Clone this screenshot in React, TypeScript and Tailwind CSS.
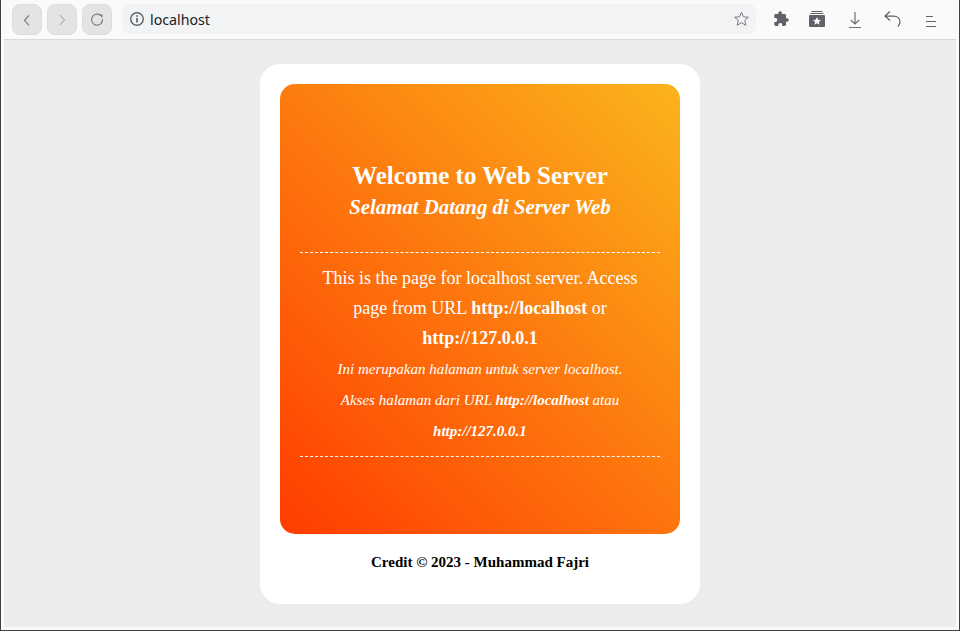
import React from "react";

function NavButton({ children, className }: { children: React.ReactNode; className: string }) {
  return (
    <button className={`flex h-[31px] w-[30px] items-center justify-center rounded-[8px] border border-[#dcdcdc] bg-[#e4e4e4] ${className}`}>
      {children}
    </button>
  );
}

function Toolbar() {
  return (
    <header className="flex h-[40px] shrink-0 items-start border-b border-[#d9d9d9] bg-[#fafafa] pt-1 pl-2">
      <div className="flex gap-[5px]">
        <NavButton className="text-[#77787a]">
          <svg width="16" height="16" fill="none" stroke="currentColor" strokeWidth="1.2"><path d="M10 3.300 5.500 8.300 10 13.300" /></svg>
        </NavButton>
        <NavButton className="text-[#b4b4b4]">
          <svg width="16" height="16" fill="none" stroke="currentColor" strokeWidth="1.2"><path d="M6 3 10.500 8 6 13" /></svg>
        </NavButton>
        <NavButton className="text-[#77787a]">
          <svg width="16" height="16" fill="none" stroke="currentColor" strokeWidth="1.1">
            <path d="M11.500 3.400A5.500 5.500 0 1 0 13.500 7" />
            <path d="M10 2.500h3.500V6z" fill="currentColor" stroke="none" />
          </svg>
        </NavButton>
      </div>
      <div className="ml-[10px] flex h-[30px] w-[634px] items-center rounded-[8px] bg-[#f1f3f4] pl-2 pr-[7px]">
        <svg width="14" height="14" viewBox="0 0 14 14" fill="none" stroke="#5f6368">
          <circle cx="7" cy="7" r="6.250" strokeWidth="1.400" />
          <path d="M7 6v4.500M7 3.200v1.600" strokeWidth="1.700" />
        </svg>
        <span className="ml-[6px] pt-[2px] font-['Noto_Sans',sans-serif] text-[14.2px] leading-5 text-[#202124]">localhost</span>
        <svg className="ml-auto" width="16" height="16" viewBox="0 0 16 16" fill="none" stroke="#77797d" strokeWidth="1">
          <path d="m8.500 1.300 2 4.500 4.900.45-3.700 3.200 1.100 4.800-4.300-2.550-4.300 2.550 1.100-4.800-3.700-3.200 4.900-.45z" />
        </svg>
      </div>
      <svg className="mt-[7px] ml-[17px]" width="16" height="16" viewBox="0 0 16 16" fill="#5f6368">
        <path d="M14 7.200h-1V4.400C13 3.600 12.400 3 11.600 3H8.900V2a1.800 1.800 0 0 0-3.600 0v1H2.700c-.8 0-1.400.6-1.400 1.400v2.500h1a2 2 0 0 1 0 4h-1v2.700c0 .8.600 1.400 1.400 1.400h2.600v-1a2 2 0 0 1 4 0v1h2.300c.8 0 1.400-.6 1.400-1.400v-2.800h1a1.800 1.800 0 0 0 0-3.600z" />
      </svg>
      <svg className="mt-[7px] ml-[19px]" width="17" height="17" viewBox="-0.5 0 17 17" fill="#5f6368">
        <path d="M3 0h11v1H3zM2 2h13v1H2z" />
        <path fillRule="evenodd" d="M1.500 4h14v0q1 0 1 1v10q0 1-1 1h-14q-1 0-1-1V5q0-1 1-1zm7 2-1.200 2.700-2.900.2 2.200 1.900-.7 2.900 2.600-1.500 2.600 1.500-.7-2.900 2.200-1.900-2.900-.2z" />
      </svg>
      <svg className="mt-[7px] ml-[23px]" width="14" height="17" viewBox="0 0 14 17" fill="none" stroke="#6d7074" strokeWidth="1.200">
        <path d="M7 1v12M2.800 9 7 13l4.200-4" />
        <path d="M1 16.500h12" strokeWidth="1" />
      </svg>
      <svg className="mt-[7px] ml-[22px]" width="18" height="17" viewBox="0.5 0 18 17" fill="none" stroke="#5f6368" strokeWidth="1.250">
        <path d="M6.500.5 1.500 5l5 4.500M1.500 5H10c4 0 6.500 2.500 6.500 6 0 1.800-.7 3-2 4.500" />
      </svg>
      <svg className="mt-[11px] ml-[23px]" width="12" height="13" viewBox="0 0 12 13" stroke="#5f6368">
        <path d="M1 1.500h7M1 6.500h10M1 11.500h10" />
      </svg>
    </header>
  );
}

export default function App() {
  return (
    <div className="flex h-[631px] w-[960px] flex-col border-x border-b border-[#414144] bg-[#fafafa] px-[3px] pb-[3px]">
      <Toolbar />
      <main className="flex flex-1 flex-col items-center bg-[#ececec] pt-6 font-['Liberation_Serif',serif]">
        <div className="h-[540px] w-[440px] rounded-[20px] bg-white p-5 text-center">
          <section className="flex h-[450px] flex-col rounded-[15px] bg-[linear-gradient(45deg,#ff3c00,#fbb41c)] px-5 text-white">
            <h1 className="mt-[77px] text-[25px] leading-[30px] font-bold">Welcome to Web Server</h1>
            <h2 className="mt-[3px] text-[20.8px] leading-[26px] font-bold italic">Selamat Datang di Server Web</h2>
            <div className="mt-8 border-y border-dashed border-white px-5 pt-[10px] pb-[9px]">
              <p className="text-[18px] leading-[30px]">
                This is the page for localhost server. Access page from URL <b>http://localhost</b> or <b>http://127.0.0.1</b>
              </p>
              <p className="mt-px text-[15px] leading-[31px] italic">
                Ini merupakan halaman untuk server localhost. Akses halaman dari URL <b>http://localhost</b> atau <b>http://127.0.0.1</b>
              </p>
            </div>
          </section>
          <footer className="mt-5 text-[15px] leading-[17px] font-bold text-black">Credit © 2023 - Muhammad Fajri</footer>
        </div>
      </main>
    </div>
  );
}
